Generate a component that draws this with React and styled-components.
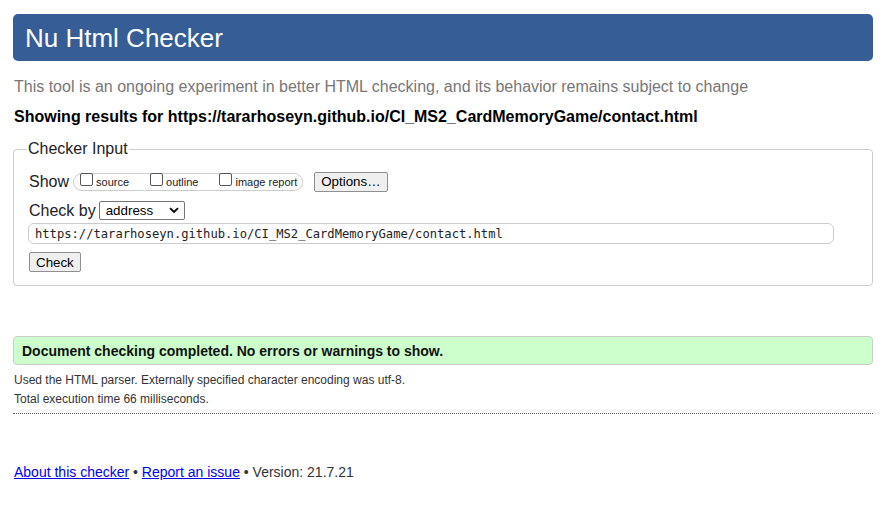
import React from 'react';
import styled, { createGlobalStyle } from 'styled-components';

const GlobalStyle = createGlobalStyle`
	body {
		margin: 0;
		background: #fff;
		font-family: "Liberation Sans", Arial, sans-serif;
		color: #000;
	}
`;

const Page = styled.div`
	padding: 14px 16px 30px 13px;
`;

const Header = styled.header`
	display: flex;
	align-items: center;
	height: 47px;
	padding-left: 12px;
	background: #365d95;
	border-radius: 5px;
`;

const Title = styled.h1`
	margin: 0;
	font-size: 26px;
	font-weight: normal;
	color: #fff;
	line-height: 30px;
`;

const Intro = styled.p`
	margin: 17px 0 0 1px;
	font-size: 16px;
	line-height: 18px;
	color: #777;
`;

const Showing = styled.h2`
	margin: 12px 0 0 1px;
	font-size: 16px;
	line-height: 18px;
	font-weight: bold;
`;

const Fieldset = styled.fieldset`
	margin: 14px 0 0;
	padding: 0 15px 13px;
	border: 1px solid #ccc;
	border-radius: 4px;
	min-width: 0;
`;

const Legend = styled.legend`
	margin-left: -2px;
	padding: 0 1px;
	font-size: 16px;
	line-height: 18px;
	color: #222;
`;

const Row = styled.div`
	display: flex;
	align-items: center;
	margin-top: ${(p) => p.top}px;
	height: ${(p) => p.h}px;
`;

const Label = styled.span`
	font-size: 16px;
	line-height: 18px;
	color: #222;
`;

const Pill = styled.span`
	display: flex;
	align-items: center;
	height: 16px;
	padding: 0 5px 0 5px;
	margin-left: 4px;
	border: 1px solid #ccc;
	border-radius: 9px;
`;

const CheckItem = styled.label`
	display: flex;
	align-items: center;
	font-size: 11px;
	color: #222;
	margin-right: ${(p) => p.gap || 0}px;
`;

const Box = styled.input.attrs({ type: 'checkbox' })`
	appearance: none;
	width: 13px;
	height: 13px;
	margin: 0 3px 0 1px;
	border: 1px solid #555;
	border-radius: 2px;
	background: #fff;
	position: relative;
	top: -2px;
`;

const Button = styled.button`
	height: ${(p) => p.h || 20}px;
	padding: 0 6px;
	font-family: "Liberation Sans", Arial, sans-serif;
	font-size: 13.33px;
	color: #000;
	background: #efefef;
	border: 1px solid #8f8f8f;
	border-radius: 2px;
	margin-left: ${(p) => p.left || 0}px;
`;

const SelectBox = styled.span`
	display: flex;
	align-items: center;
	justify-content: space-between;
	box-sizing: border-box;
	width: 86px;
	height: 19px;
	margin-left: 3px;
	padding: 0 5px 0 6px;
	border: 1px solid #767676;
	border-radius: 2px;
	font-size: 13.33px;
	color: #000;
`;

const UrlInput = styled.div`
	box-sizing: border-box;
	display: flex;
	align-items: center;
	width: 806px;
	height: 21px;
	margin-top: 2px;
	margin-left: -1px;
	padding-left: 6px;
	border: 1px solid #ccc;
	border-radius: 6px;
	font-family: "DejaVu Sans Mono", "Liberation Mono", monospace;
	font-size: 12.15px;
	color: #222;
`;

const Success = styled.div`
	display: flex;
	align-items: center;
	height: 27px;
	margin-top: 50px;
	padding-left: 8px;
	background: #ccffcc;
	border: 1px solid #ccc;
	border-radius: 4px;
	font-size: 14px;
	font-weight: bold;
	color: #111;
`;

const Details = styled.div`
	margin-top: 6px;
	padding-bottom: 4px;
	border-bottom: 1px dotted #555;
`;

const Detail = styled.p`
	margin: 0 0 0 1px;
	font-size: 12px;
	line-height: 19px;
	color: #333;
`;

const Footer = styled.p`
	margin: 50px 0 0 1px;
	font-size: 14px;
	line-height: 16px;
	color: #333;
`;

const Link = styled.a`
	color: #00e;
	text-decoration: underline;
`;

const Chevron = () => (
	<svg width="10" height="7" viewBox="0 0 10 7">
		<path d="M1 1.2 L5 5 L9 1.2" fill="none" stroke="#000" strokeWidth="1.8" />
	</svg>
);

const App = () => {
	const url = 'https://tararhoseyn.github.io/CI_MS2_CardMemoryGame/contact.html';
	return (
		<Page>
			<GlobalStyle />
			<Header>
				<Title>Nu Html Checker</Title>
			</Header>
			<Intro>
				This tool is an ongoing experiment in better HTML checking, and its behavior remains subject to change
			</Intro>
			<Showing>Showing results for {url}</Showing>

			<Fieldset>
				<Legend>Checker Input</Legend>
				<Row top={13} h={21}>
					<Label>Show</Label>
					<Pill>
						<CheckItem gap={20}>
							<Box />source
						</CheckItem>
						<CheckItem gap={20}>
							<Box />outline
						</CheckItem>
						<CheckItem>
							<Box />image report
						</CheckItem>
					</Pill>
					<Button left={11}>Options…</Button>
				</Row>
				<Row top={8} h={21}>
					<Label>Check by</Label>
					<SelectBox>
						address
						<Chevron />
					</SelectBox>
				</Row>
				<UrlInput>{url}</UrlInput>
				<Row top={8} h={20}>
					<Button>Check</Button>
				</Row>
			</Fieldset>

			<Success>Document checking completed. No errors or warnings to show.</Success>
			<Details>
				<Detail>Used the HTML parser. Externally specified character encoding was utf-8.</Detail>
				<Detail>Total execution time 66 milliseconds.</Detail>
			</Details>

			<Footer>
				<Link href="#">About this checker</Link> • <Link href="#">Report an issue</Link> • Version: 21.7.21
			</Footer>
		</Page>
	);
};

export default App;
